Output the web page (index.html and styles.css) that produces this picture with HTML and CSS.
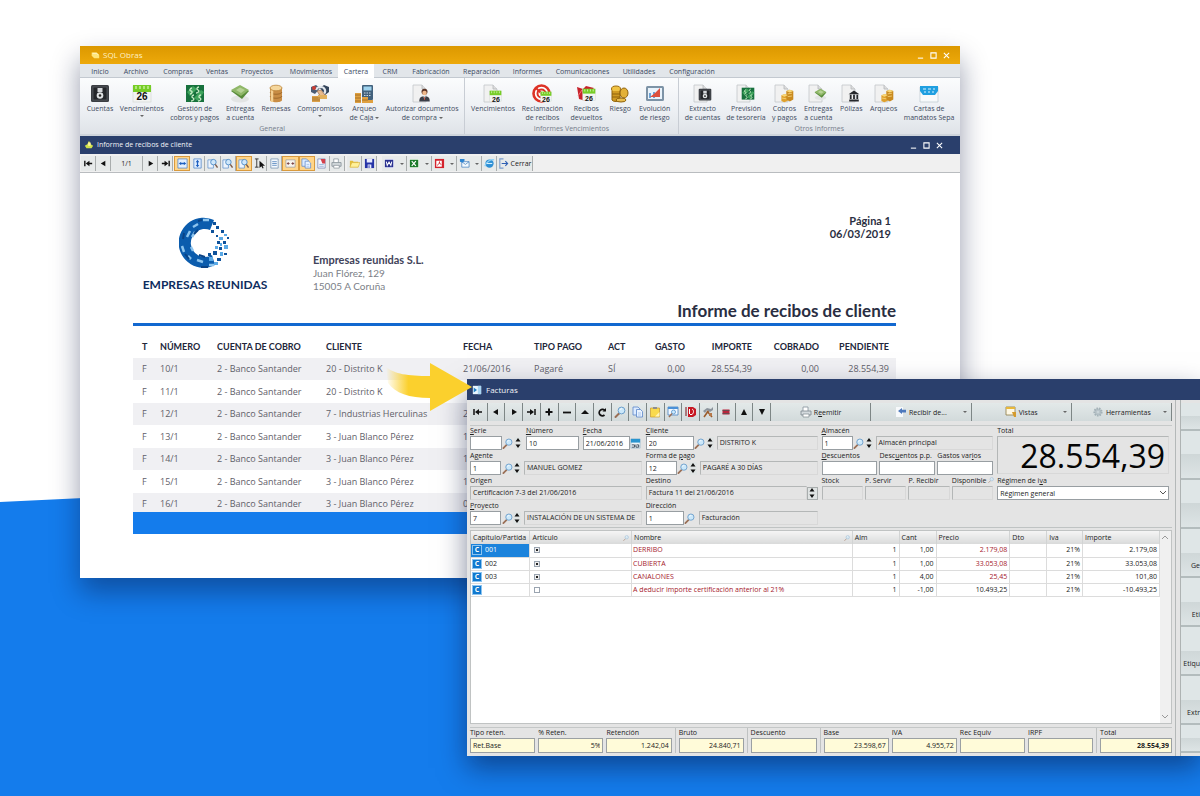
FILE: index.html
```html
<!DOCTYPE html>
<html lang="es">
<head>
<meta charset="utf-8">
<meta name="viewport" content="width=device-width, initial-scale=1">
<title>SQL Obras</title>
<link rel="stylesheet" href="styles.css">
</head>
<body>
<svg class="sprite" aria-hidden="true">
  <symbol id="doc" viewBox="0 0 20 20"><path d="M1 1h9l4 4v13H1z" fill="#f1f1f1" stroke="#c3c6ca" stroke-width=".8"/><path d="M10 1v4h4" fill="#ddd" stroke="#b5b8bb" stroke-width=".8"/></symbol>
  <symbol id="safe" viewBox="0 0 20 20"><rect x="1" y="1" width="18" height="17" rx="1.500" fill="#3b3e43"/><rect x="3" y="3" width="14" height="13" fill="#24262a" stroke="#5d6168" stroke-width=".7"/><rect x="7.500" y="4" width="5" height="4" fill="#d5d8db"/><circle cx="10" cy="11.500" r="3.300" fill="#dfe2e4"/><circle cx="10" cy="11.500" r="1.300" fill="#222"/></symbol>
  <symbol id="cal" viewBox="0 0 20 20"><rect x="1" y="2" width="18" height="16" fill="#f3f4f2" stroke="#cfd3cf" stroke-width=".6"/><path d="M1 1h18v7H1z" fill="#76cd26"/><path d="M4 2v3M8 2v3M12 2v3M16 2v3" stroke="#d8f5b8" stroke-width="1.200"/></symbol>
  <symbol id="money" viewBox="0 0 20 20"><path d="M1 1h18v17H1z" fill="#17713d"/><path d="M2 8l6-6 4 3-7 7zM9 14l7-8 3 2-6 9z" fill="#3fa45d"/><path d="M7 4c-2 0-3 3-1 3s1 3-1 3M14 3c-2 0-3 2-1 3s0 3-2 3M9 11c-2 0-3 2-1 3s0 3-2 3M16 11c-2 0-3 2-1 3s0 3-2 3" fill="none" stroke="#c8ecc6" stroke-width="1.300"/></symbol>
  <symbol id="stack" viewBox="0 0 20 20"><ellipse cx="10" cy="15" rx="9" ry="3.500" fill="#e2e4e4"/><path d="M1 7l9-5 9 5-7 8z" fill="#588b3a"/><path d="M1 6l9-5 9 5-8 6z" fill="#8fb768"/><path d="M6 6l4-2.500L15 6l-4 3z" fill="#b6d295"/></symbol>
  <symbol id="coins" viewBox="0 0 20 20"><path d="M4 4v12c0 3 12 3 12 0V4z" fill="#c98d45"/><path d="M4 8c1 3 11 3 12 0M4 12c1 3 11 3 12 0" fill="none" stroke="#a06a2c" stroke-width="1"/><path d="M6 6v12" stroke="#f3d093" stroke-width="2.500"/><ellipse cx="10" cy="4" rx="6" ry="2.800" fill="#f5d79d" stroke="#bb8438" stroke-width=".8"/></symbol>
  <symbol id="shake" viewBox="0 0 20 20"><path d="M1 3l5-2 4 3-5 6-4-2z" fill="#4b5d75"/><path d="M19 3l-5-2-4 3 5 7 4-3z" fill="#35465c"/><path d="M6 6c1-4 8-4 9 0s-4 6-7 4" fill="none" stroke="#e3e8ee" stroke-width="2.200"/><path d="M7 7l4-1 4 5-4 2z" fill="#e7ba8d" stroke="#8a5b3d" stroke-width=".6"/><circle cx="4" cy="4" r="2" fill="#cc3e34"/><path d="M2 12h8v6H2z" fill="#dba14a"/><path d="M8 11h9v4H8z" fill="#e2b15e"/><path d="M2 14h8M2 16h8" stroke="#9a6420" stroke-width=".7"/></symbol>
  <symbol id="calc" viewBox="0 0 20 20"><rect x="8" y="1" width="11" height="15" rx="1" fill="#42617c"/><rect x="9.500" y="2.500" width="8" height="4" fill="#9fd3ee"/><path d="M10 9h7M10 11.500h7" stroke="#c7d8e4" stroke-dasharray="1.500 1"/><path d="M1 9h6v10H1zM8 13h6v6H8zM14 16h5v3h-5z" fill="#dfa040"/><path d="M1 11h6M1 14h6M1 17h6M8 16h6" stroke="#9b6820" stroke-width=".8"/></symbol>
  <symbol id="person" viewBox="0 0 20 20"><circle cx="10" cy="5" r="4" fill="#5b3426"/><circle cx="10" cy="6.500" r="3" fill="#efb88b"/><path d="M3 18c0-6 3-7 7-7s7 1 7 7z" fill="#3c3f48"/><path d="M8.500 11h3L10 16z" fill="#f5f5f5"/><path d="M10 12v4" stroke="#bb3c2b"/></symbol>
  <symbol id="target" viewBox="0 0 20 20"><circle cx="9.500" cy="9.500" r="8" fill="#fff" stroke="#dd3225" stroke-width="2.600"/><circle cx="9.500" cy="9.500" r="4" fill="none" stroke="#dd3225" stroke-width="2"/><path d="M4 4l7 7" stroke="#dd3225" stroke-width="2"/></symbol>
  <symbol id="back" viewBox="0 0 20 20"><path d="M1 3l6 2 3-3 8 2-5 5-5 0 2 8-7-2z" fill="#c7222b"/><path d="M2 12l4-6 5 1" fill="none" stroke="#f1757b"/></symbol>
  <symbol id="gold" viewBox="0 0 20 20"><ellipse cx="6" cy="5" rx="4.500" ry="3" fill="#f0c343" stroke="#9c6b10"/><path d="M2 7v9c1 2 7 2 8 0V7" fill="#d09a22" stroke="#8f620d"/><ellipse cx="14" cy="9" rx="4" ry="5" fill="#e3b138" stroke="#8f620d"/><path d="M2 10h8M2 13h8" stroke="#8f620d"/><ellipse cx="11" cy="16" rx="5" ry="2" fill="#e9bd4e" stroke="#8f620d"/></symbol>
  <symbol id="cubes" viewBox="0 0 20 20"><path d="M2 9l5-2 4 2v8l-5 2-4-2z" fill="#dfa02c"/><path d="M9 3l5-2 5 2v12l-5 3-5-3z" fill="#c98a1f"/><path d="M9 3l5-2 5 2-5 2zM2 9l5-2 4 2-5 2z" fill="#f8d778"/><path d="M11 7l6-1M11 11l6-1M3 13l6 1" stroke="#f3cf75" stroke-width="1.300"/></symbol>
  <symbol id="chart" viewBox="0 0 20 20"><rect x="1" y="2" width="18" height="15" rx="1.500" fill="#7d93a6"/><rect x="3" y="4" width="14" height="11" fill="#e9f3fb"/><path d="M4 14V9h2v5M8 14V8h2v6" fill="#6ca2d5"/><path d="M5 13l5-4 5-5v9z" fill="#dc503e"/></symbol>
  <symbol id="bank" viewBox="0 0 20 20"><path d="M10 1l9 6H1zM2 16h16v3H2zM3 8h3v7H3zM8.500 8h3v7h-3zM14 8h3v7h-3z" fill="#26282c"/></symbol>
  <symbol id="sepa" viewBox="0 0 20 20"><path d="M1 3h18v15H1z" fill="#f8fafb" stroke="#bcc7cf" stroke-width=".7"/><path d="M1 2h18v5l-3 4H4L1 7z" fill="#1f9fe0"/><path d="M4 5h3M9 5h3M14 5h2M5 8h2M9 8h2M13 8h2" stroke="#d9f1ff" stroke-width="1.200"/></symbol>
  <symbol id="first" viewBox="0 0 12 12"><path d="M2 3v6M10 6H5" stroke="#111" stroke-width="1.500"/><path d="M3 6l4-3v6z" fill="#111"/></symbol>
  <symbol id="prev" viewBox="0 0 12 12"><path d="M3 6l5-3v6z" fill="#111"/></symbol>
  <symbol id="next" viewBox="0 0 12 12"><path d="M9 6L4 3v6z" fill="#111"/></symbol>
  <symbol id="last" viewBox="0 0 12 12"><path d="M10 3v6M2 6h5" stroke="#111" stroke-width="1.500"/><path d="M9 6L5 3v6z" fill="#111"/></symbol>
  <symbol id="plus" viewBox="0 0 12 12"><path d="M6 2.500v7M2.500 6h7" stroke="#111" stroke-width="2"/></symbol>
  <symbol id="minus" viewBox="0 0 12 12"><path d="M2 6.500h8" stroke="#111" stroke-width="1.800"/></symbol>
  <symbol id="tri" viewBox="0 0 12 12"><path d="M6 4l4 4H2z" fill="#111"/></symbol>
  <symbol id="up" viewBox="0 0 12 12"><path d="M6 3l3 6H3z" fill="#111"/></symbol>
  <symbol id="down" viewBox="0 0 12 12"><path d="M6 9l3-6H3z" fill="#111"/></symbol>
  <symbol id="redo" viewBox="0 0 12 12"><path d="M8.500 9A3.200 3.200 0 1 1 9 4.800" fill="none" stroke="#111" stroke-width="1.700"/><path d="M6.500 5.500H10V2z" fill="#111"/></symbol>
  <symbol id="mag" viewBox="0 0 12 12"><path d="M5 7.500L1.500 11" stroke="#9a6f56" stroke-width="1.900" stroke-linecap="round"/><circle cx="7.500" cy="4.500" r="3.400" fill="#cbe8fa" stroke="#6d9fcb"/><path d="M6 3.800c.5-1 1.500-1 2-1" fill="none" stroke="#fff"/></symbol>
  <symbol id="pages" viewBox="0 0 12 12"><path d="M1 1h5l2 2v6H1z" fill="#dcebff" stroke="#5b86c9" stroke-width=".8"/><path d="M4.500 3.500h4l2 2V11h-6z" fill="#eaf3ff" stroke="#5b86c9" stroke-width=".8"/><path d="M6 7h3M6 9h3" stroke="#8db1e4" stroke-width=".7"/></symbol>
  <symbol id="clip" viewBox="0 0 12 12"><path d="M1.500 2h9v9h-9z" fill="#f9da4d" stroke="#c9992c" stroke-width=".7"/><path d="M4 1h4v2H4z" fill="#8f8f8f"/><path d="M6 10.500L10.500 6v4.500z" fill="#fff4b8"/></symbol>
  <symbol id="view" viewBox="0 0 12 12"><path d="M1 1h10v8H1z" fill="#f2f8ff" stroke="#4783c3" stroke-width=".8"/><path d="M1 1h10v2H1z" fill="#4b91d8"/><circle cx="6.500" cy="6" r="2" fill="#cdeafd" stroke="#5492ca" stroke-width=".8"/><path d="M5 7.500L2 11" stroke="#9a6f56" stroke-width="1.400"/></symbol>
  <symbol id="power" viewBox="0 0 12 12"><path d="M3 1h5l3 2v6L8 11H3z" fill="#c71722"/><path d="M4.500 3v5M7 3c2 1 2 4 0 5.500H5" stroke="#fff" fill="none"/><path d="M1 1v9" stroke="#7b0e16"/></symbol>
  <symbol id="tools" viewBox="0 0 12 12"><path d="M2 11l5-7M10 11L5 5" stroke="#9a5b2b" stroke-width="1.600"/><path d="M1 5l4-3 4 1 2-2v3L8 6 5 4 3 7z" fill="#8c949c"/><path d="M7 7h3v3H7z" fill="#b7794a"/></symbol>
  <symbol id="red" viewBox="0 0 12 12"><path d="M2.500 3.500h7v5h-7z" fill="#b9253c"/><path d="M2.500 4.500h7M2.500 7.500h7" stroke="#555" stroke-width=".8"/></symbol>
  <symbol id="print" viewBox="0 0 12 12"><path d="M3 5V1h5v4" fill="#fff" stroke="#849099" stroke-width=".8"/><path d="M1 5h10v4H1z" fill="#d4dade" stroke="#7b868e" stroke-width=".8"/><path d="M3 8h6v3H3z" fill="#fff" stroke="#7b868e" stroke-width=".7"/></symbol>
  <symbol id="recv" viewBox="0 0 12 12"><path d="M1 1h7v10H1z" fill="#f7f9fb"/><path d="M3 5l4-3v1.800h4v2.800H7V8z" fill="#4d79bd"/></symbol>
  <symbol id="win" viewBox="0 0 12 12"><path d="M1 1h9v8H1z" fill="#fff9e5" stroke="#8b7a45" stroke-width=".8"/><path d="M1 1h9v2H1z" fill="#e8b83b"/><path d="M7 6h4v5H9z" fill="#d59b2d"/></symbol>
  <symbol id="gear" viewBox="0 0 12 12"><circle cx="6" cy="6" r="3.600" fill="#b7c3c8" stroke="#a3b1b7" stroke-width="2" stroke-dasharray="1.500 1"/><circle cx="6" cy="6" r="1.300" fill="#c9d4d8"/></symbol>
  <symbol id="fitw" viewBox="0 0 12 12"><path d="M1 1h10v10H1z" fill="#e3f0ff" stroke="#4a80c7" stroke-width=".8"/><path d="M2 6l2.500-2v1.300h3V4L10 6 7.500 8V6.700h-3V8z" fill="#1d5fc0"/></symbol>
  <symbol id="cont" viewBox="0 0 12 12"><path d="M1 2h10v8H1z" fill="#f7f4ee" stroke="#9d9d9d" stroke-width=".8"/><path d="M2 6h3M7 6h3M3.500 4.500v3M8.500 4.500v3" stroke="#7b4444"/></symbol>
  <symbol id="fith" viewBox="0 0 12 12"><path d="M2 1h8v10H2z" fill="#e3f0ff" stroke="#4a80c7" stroke-width=".8"/><path d="M6 2l2 2.500H6.700v3H8L6 10 4 7.500h1.300v-3H4z" fill="#1d5fc0"/></symbol>
  <symbol id="zoomdoc" viewBox="0 0 12 12"><path d="M1 2h6v9H1z" fill="#edf4fc" stroke="#5f92cc" stroke-width=".8"/><circle cx="7" cy="4.500" r="3" fill="#cfe7fa" stroke="#4384c4" stroke-width=".9"/><path d="M9 7l2.500 3.500" stroke="#7c5b4b" stroke-width="1.500"/></symbol>
  <symbol id="cursor" viewBox="0 0 12 12"><path d="M1 1h4M3 1v9M1 10h4" stroke="#222" stroke-width=".9"/><path d="M6 3v8l2-2 1.500 2.500 1-.6L9.300 8.500H12z" fill="#111"/></symbol>
  <symbol id="sheet" viewBox="0 0 12 12"><path d="M2 1h8v10H2z" fill="#f5f9fd" stroke="#6f8fae" stroke-width=".8"/><path d="M3.500 4h5M3.500 6h5M3.500 8h5" stroke="#5587bd" stroke-width=".9"/></symbol>
  <symbol id="redsheet" viewBox="0 0 12 12"><path d="M2 1h8v10H2z" fill="#f6f7ff" stroke="#7684b3" stroke-width=".8"/><path d="M5 1h5v5H7z" fill="#d4414c"/><path d="M3.500 7h5M3.500 9h5" stroke="#7da3cd" stroke-width=".8"/></symbol>
  <symbol id="folder" viewBox="0 0 12 12"><path d="M1 10V3h3l1 1h5v6z" fill="#e3bd3a"/><path d="M1 10l2-5h9l-2 5z" fill="#fff19a" stroke="#d1a82c" stroke-width=".6"/></symbol>
  <symbol id="save" viewBox="0 0 12 12"><path d="M1 1h10v10H1z" fill="#2533a6"/><path d="M3 1h6v4H3zM4 7h4v4H4z" fill="#e8ebff"/><path d="M5 8h1v3H5z" fill="#2533a6"/></symbol>
  <symbol id="word" viewBox="0 0 12 12"><path d="M1 1h10v10H1z" fill="#dfe3f7"/><path d="M1 2h9v8H1z" fill="#29308f"/><path d="M2.500 4l1 4 2-3.500 2 3.500 1-4" fill="none" stroke="#fff" stroke-width="1.100"/></symbol>
  <symbol id="excel" viewBox="0 0 12 12"><path d="M1 1h10v10H1z" fill="#e2f0e1"/><path d="M1 2h9v8H1z" fill="#1b7b2a"/><path d="M3 3.500l4.500 5M7.500 3.500L3 8.500" stroke="#fff" stroke-width="1.300"/></symbol>
  <symbol id="pdf" viewBox="0 0 12 12"><path d="M1 1h10v10H1z" fill="#d4232d"/><path d="M2.500 3h6v6.500h-6z" fill="#fff"/><path d="M3.500 8c2-1 3-4 2.500-4s0 3 2 3" fill="none" stroke="#d4232d"/></symbol>
  <symbol id="mail" viewBox="0 0 12 12"><path d="M3 4h8v6H3z" fill="#f5fbff" stroke="#4380bf" stroke-width=".8"/><path d="M3 4l4 3 4-3" fill="none" stroke="#4380bf" stroke-width=".8"/><path d="M1 1h5v2l-2 2-3-1z" fill="#2d84d1"/></symbol>
  <symbol id="globe" viewBox="0 0 12 12"><circle cx="6" cy="6" r="4.500" fill="#2e8fd4"/><path d="M1 9C2 4 8 1 11 2" fill="none" stroke="#8bd0f7" stroke-width="1.500"/><path d="M3 6h6" stroke="#d6f0ff" stroke-width="1.200"/></symbol>
  <symbol id="exit" viewBox="0 0 12 12"><path d="M6 1H2v10h4" fill="none" stroke="#7b9ccc" stroke-width="1.200"/><path d="M4 6h6M8 3.500L10.500 6 8 8.500" fill="none" stroke="#2e5fb4" stroke-width="1.200"/></symbol>
  <symbol id="minical" viewBox="0 0 12 12"><path d="M1 1h10v10H1z" fill="#eef6fa" stroke="#7fa8c0" stroke-width=".6"/><path d="M1 1h10v4H1z" fill="#2a95cf"/><path d="M2 7.500h3v2.500H2M6.500 7v3h3V7.500h-2" fill="none" stroke="#234" stroke-width=".9"/></symbol>
  <symbol id="spin" viewBox="0 0 8 12"><path d="M4 1l2.500 3.500h-5zM4 11l2.500-3.500h-5z" fill="#111"/></symbol>
</svg>

<main class="desktop">
  <section class="window obras">
    <header class="titlebar gold">
      <svg class="i10" viewBox="0 0 12 12"><path d="M2 3h6l3 3v4H5L2 7z" fill="#ffe67a"/><path d="M3 4h5l2 2" fill="none" stroke="#fff8cf"/></svg>
      <h1>SQL Obras</h1>
      <div class="winbtns">
        <button aria-label="Minimizar"><svg viewBox="0 0 8 8"><path d="M1 7h6"/></svg></button>
        <button aria-label="Maximizar"><svg viewBox="0 0 8 8"><path d="M1 1h6v6H1z"/></svg></button>
        <button aria-label="Cerrar ventana"><svg viewBox="0 0 8 8"><path d="M1 1l6 6M7 1L1 7"/></svg></button>
      </div>
    </header>
    <nav class="tabs">
      <button>Inicio</button><button>Archivo</button><button>Compras</button><button>Ventas</button><button>Proyectos</button><button>Movimientos</button><button class="active">Cartera</button><button>CRM</button><button>Fabricación</button><button>Reparación</button><button>Informes</button><button>Comunicaciones</button><button>Utilidades</button><button>Configuración</button>
    </nav>
    <div class="ribbon">
      <section class="group general">
        <div class="tools">
          <button><svg><use href="#safe"/></svg>Cuentas</button>
          <button><svg viewBox="0 0 20 20"><use href="#cal"/><text x="10" y="16" class="day">26</text></svg>Vencimientos<i class="caret"></i></button>
          <button><svg><use href="#money"/></svg>Gestión de<br>cobros y pagos</button>
          <button><svg><use href="#stack"/></svg>Entregas<br>a cuenta</button>
          <button><svg><use href="#coins"/></svg>Remesas</button>
          <button><svg><use href="#shake"/></svg>Compromisos<i class="caret"></i></button>
          <button><svg><use href="#calc"/></svg>Arqueo<span>de Caja <i class="caret"></i></span></button>
          <button><svg viewBox="0 0 20 20"><use href="#doc"/><use href="#person" x="5" y="4" width="15" height="15"/></svg>Autorizar documentos<span>de compra <i class="caret"></i></span></button>
        </div>
        <h2>General</h2>
      </section>
      <section class="group due">
        <div class="tools">
          <button><svg viewBox="0 0 20 20"><use href="#doc"/><use href="#cal" x="6" y="6" width="13" height="13"/><text x="13" y="18" class="day small">26</text></svg>Vencimientos</button>
          <button><svg viewBox="0 0 20 20"><use href="#target"/><use href="#cal" x="8" y="7" width="12" height="12"/><text x="14" y="18" class="day small">26</text></svg>Reclamación<br>de recibos</button>
          <button><svg viewBox="0 0 20 20"><use href="#back"/><use href="#cal" x="6" y="4" width="14" height="14"/><text x="13" y="17" class="day small">26</text></svg>Recibos<br>devueltos</button>
          <button><svg><use href="#gold"/></svg>Riesgo</button>
          <button><svg><use href="#chart"/></svg>Evolución<br>de riesgo</button>
        </div>
        <h2>Informes Vencimientos</h2>
      </section>
      <section class="group other">
        <div class="tools">
          <button><svg viewBox="0 0 20 20"><use href="#doc"/><use href="#safe" x="5" y="4" width="14" height="14"/></svg>Extracto<br>de cuentas</button>
          <button><svg viewBox="0 0 20 20"><use href="#doc"/><use href="#money" x="5" y="3" width="14" height="14"/></svg>Previsión<br>de tesorería</button>
          <button><svg viewBox="0 0 20 20"><use href="#doc"/><use href="#cubes" x="6" y="5" width="14" height="14"/></svg>Cobros<br>y pagos</button>
          <button><svg viewBox="0 0 20 20"><use href="#doc"/><use href="#stack" x="5" y="4" width="15" height="13"/></svg>Entregas<br>a cuenta</button>
          <button><svg viewBox="0 0 20 20"><use href="#doc"/><use href="#bank" x="7" y="6" width="12" height="12"/></svg>Pólizas</button>
          <button><svg viewBox="0 0 20 20"><use href="#doc"/><use href="#cubes" x="6" y="5" width="14" height="14"/></svg>Arqueos</button>
          <button><svg><use href="#sepa"/></svg>Cartas de<br>mandatos Sepa</button>
        </div>
        <h2>Otros Informes</h2>
      </section>
    </div>
    <header class="titlebar navy">
      <svg class="i10" viewBox="0 0 12 12"><path d="M6 1l2 4 3 2-2 3H3L1 7l3-2z" fill="#cfe04a"/><path d="M5 3h3v4H5z" fill="#fff3a0"/></svg>
      <h2>Informe de recibos de cliente</h2>
      <div class="winbtns">
        <button aria-label="Minimizar"><svg viewBox="0 0 8 8"><path d="M1 7h6"/></svg></button>
        <button aria-label="Maximizar"><svg viewBox="0 0 8 8"><path d="M1 1h6v6H1z"/></svg></button>
        <button aria-label="Cerrar informe"><svg viewBox="0 0 8 8"><path d="M1 1l6 6M7 1L1 7"/></svg></button>
      </div>
    </header>
    <div class="viewer-bar">
      <button aria-label="Primera"><svg><use href="#first"/></svg></button>
      <button aria-label="Anterior"><svg><use href="#prev"/></svg></button>
      <input class="page-no" aria-label="Página" value="1/1">
      <button aria-label="Siguiente"><svg><use href="#next"/></svg></button>
      <button aria-label="Última"><svg><use href="#last"/></svg></button>
      <div class="modes">
        <button class="on" aria-label="Ajustar ancho"><svg><use href="#fitw"/></svg></button>
        <button aria-label="Ajustar alto"><svg><use href="#fith"/></svg></button>
        <button aria-label="Acercar"><svg><use href="#zoomdoc"/></svg></button>
        <button aria-label="Alejar"><svg><use href="#zoomdoc"/></svg></button>
        <button class="on" aria-label="Lupa"><svg><use href="#zoomdoc"/></svg></button>
        <button aria-label="Seleccionar"><svg><use href="#cursor"/></svg></button>
        <button aria-label="Hoja"><svg><use href="#sheet"/></svg></button>
        <button class="on" aria-label="Continuo"><svg><use href="#cont"/></svg></button>
        <button class="on" aria-label="Páginas"><svg><use href="#pages"/></svg></button>
        <button aria-label="Configurar"><svg><use href="#redsheet"/></svg></button>
        <button aria-label="Imprimir"><svg><use href="#print"/></svg></button>
      </div>
      <button class="gap" aria-label="Abrir"><svg><use href="#folder"/></svg></button>
      <button aria-label="Guardar"><svg><use href="#save"/></svg></button>
      <div class="exports">
        <button class="wide" aria-label="Word"><svg><use href="#word"/></svg><i class="caret"></i></button>
        <button class="wide" aria-label="Excel"><svg><use href="#excel"/></svg><i class="caret"></i></button>
        <button class="wide" aria-label="PDF"><svg><use href="#pdf"/></svg><i class="caret"></i></button>
        <button class="wide" aria-label="Correo"><svg><use href="#mail"/></svg><i class="caret"></i></button>
      </div>
      <button aria-label="Web"><svg><use href="#globe"/></svg></button>
      <button class="close"><svg><use href="#exit"/></svg>Cerrar</button>
    </div>
    <article class="report">
      <header class="report-head">
        <div class="brand">
          <svg viewBox="0 0 52 52">
            <path d="M35 3A25 25 0 1 0 36 48L33 38A14 14 0 1 1 31 13z" fill="#0b5cad"/>
            <g fill="none" stroke="#8cc4ee" stroke-width="2.500"><path d="M8 20l3-6M14 10l5-3M24 3h6M3 29l2 6M9 39l3 3M18 43l6 2M30 48h5M13 20l3-5M12 30l2 4"/></g>
            <g fill="none" stroke="#0a4386" stroke-width="2"><path d="M4 22l1-6M19 4l4-1M6 37l4 5M22 50l7 0M20 38l6 2M15 17l4-4"/></g>
            <path d="M32 13h3v3h-3zM37 9h3v3h-3zM42 13h3v3h-3zM37 18h2v2h-2zM34 34h4v4h-4zM40 30h3v3h-3zM44 24h3v3h-3zM48 20h2v2h-2zM38 41h4v3h-4zM45 36h3v2h-3zM38 24h3v3h-3zM34 5h3v3h-3zM29 36h3v3h-3z" fill="#0e529b"/>
            <path d="M40 20h4v3h-4zM45 28h4v4h-4zM41 35h3v4h-3zM36 29h3v3h-3zM35 45h4v3h-4zM45 17h3v2h-3zM30 40h4v4h-4zM41 26h2v3h-2z" fill="#5aa9e6"/>
          </svg>
          <strong>EMPRESAS REUNIDAS</strong>
        </div>
        <address><strong>Empresas reunidas S.L.</strong><br>Juan Flórez, 129<br>15005 A Coruña</address>
        <p class="page">Página 1<br>06/03/2019</p>
      </header>
      <h3>Informe de recibos de cliente</h3>
      <table class="receipts">
        <colgroup><col class="r1"><col class="r2"><col class="r3"><col class="r4"><col class="r5"><col class="r6"><col class="r7"><col class="r8"><col class="r9"><col class="r10"><col class="r11"></colgroup>
        <thead><tr><th>T</th><th>NÚMERO</th><th>CUENTA DE COBRO</th><th>CLIENTE</th><th>FECHA</th><th>TIPO PAGO</th><th>ACT</th><th class="n">GASTO</th><th class="n">IMPORTE</th><th class="n">COBRADO</th><th class="n">PENDIENTE</th></tr></thead>
        <tbody>
          <tr><td>F</td><td>10/1</td><td>2 - Banco Santander</td><td>20 - Distrito K</td><td>21/06/2016</td><td>Pagaré</td><td>SÍ</td><td class="n">0,00</td><td class="n">28.554,39</td><td class="n">0,00</td><td class="n">28.554,39</td></tr>
          <tr><td>F</td><td>11/1</td><td>2 - Banco Santander</td><td>20 - Distrito K</td><td></td><td></td><td></td><td></td><td></td><td></td><td></td></tr>
          <tr><td>F</td><td>12/1</td><td>2 - Banco Santander</td><td>7 - Industrias Herculinas</td><td>2</td><td></td><td></td><td></td><td></td><td></td><td></td></tr>
          <tr><td>F</td><td>13/1</td><td>2 - Banco Santander</td><td>3 - Juan Blanco Pérez</td><td>1</td><td></td><td></td><td></td><td></td><td></td><td></td></tr>
          <tr><td>F</td><td>14/1</td><td>2 - Banco Santander</td><td>3 - Juan Blanco Pérez</td><td>1</td><td></td><td></td><td></td><td></td><td></td><td></td></tr>
          <tr><td>F</td><td>15/1</td><td>2 - Banco Santander</td><td>3 - Juan Blanco Pérez</td><td>1</td><td></td><td></td><td></td><td></td><td></td><td></td></tr>
          <tr><td>F</td><td>16/1</td><td>2 - Banco Santander</td><td>3 - Juan Blanco Pérez</td><td>0</td><td></td><td></td><td></td><td></td><td></td><td></td></tr>
        </tbody>
      </table>
      <div class="report-foot"></div>
    </article>
  </section>

  <section class="window facturas">
    <header class="titlebar navy tall">
      <svg class="i10" viewBox="0 0 12 12"><path d="M1 1h10v10H1z" fill="#e9f6ff"/><path d="M7 1h4v10H7z" fill="#a9d6f3"/><path d="M2 3l4 3-4 3z" fill="#1f7fc4"/></svg>
      <h2>Facturas</h2>
    </header>
    <div class="invoice">
      <div class="invoice-main">
        <div class="bar">
          <div class="bar-icons">
            <button aria-label="Primero"><svg><use href="#first"/></svg></button><button aria-label="Anterior"><svg><use href="#prev"/></svg></button><button aria-label="Siguiente"><svg><use href="#next"/></svg></button><button aria-label="Último"><svg><use href="#last"/></svg></button><button aria-label="Añadir"><svg><use href="#plus"/></svg></button><button aria-label="Eliminar"><svg><use href="#minus"/></svg></button><button aria-label="Editar"><svg><use href="#tri"/></svg></button><button aria-label="Refrescar"><svg><use href="#redo"/></svg></button><button aria-label="Buscar"><svg><use href="#mag"/></svg></button><button aria-label="Copiar"><svg><use href="#pages"/></svg></button><button aria-label="Pegar"><svg><use href="#clip"/></svg></button><button aria-label="Vista previa"><svg><use href="#view"/></svg></button><button aria-label="Salir"><svg><use href="#power"/></svg></button><button aria-label="Utilidades"><svg><use href="#tools"/></svg></button><button aria-label="Líneas"><svg><use href="#red"/></svg></button><button aria-label="Subir"><svg><use href="#up"/></svg></button><button aria-label="Bajar"><svg><use href="#down"/></svg></button>
          </div>
          <button class="big"><svg><use href="#print"/></svg><span>R<u>e</u>emitir</span></button>
          <button class="big"><svg><use href="#recv"/></svg>Recibir de...<i class="caret"></i></button>
          <button class="big"><svg><use href="#win"/></svg>Vistas<i class="caret"></i></button>
          <button class="big"><svg><use href="#gear"/></svg>Herramientas<i class="caret"></i></button>
        </div>

        <form class="form">
          <div class="col col-a">
            <div class="row first">
              <div class="field"><label for="serie"><u>S</u>erie</label><div class="ctl"><input id="serie"><button type="button" class="pick" aria-label="Buscar serie"><svg><use href="#mag"/></svg></button><button type="button" class="spin" aria-label="Cambiar serie"><svg><use href="#spin"/></svg></button></div></div>
              <div class="field"><label for="numero"><u>N</u>úmero</label><div class="ctl"><input id="numero" value="10"></div></div>
              <div class="field"><label for="fecha"><u>F</u>echa</label><div class="ctl"><input id="fecha" value="21/06/2016"><button type="button" class="pick" aria-label="Calendario"><svg><use href="#minical"/></svg></button></div></div>
            </div>
            <div class="field"><label for="agente">A<u>g</u>ente</label><div class="ctl"><input id="agente" class="code" value="1"><button type="button" class="pick" aria-label="Buscar agente"><svg><use href="#mag"/></svg></button><button type="button" class="spin" aria-label="Cambiar agente"><svg><use href="#spin"/></svg></button><output>MANUEL GOMEZ</output></div></div>
            <div class="field"><label for="origen">Origen</label><div class="ctl"><output id="origen">Certificación 7-3 del 21/06/2016</output></div></div>
            <div class="field"><label for="proyecto"><u>P</u>royecto</label><div class="ctl"><input id="proyecto" class="code" value="7"><button type="button" class="pick" aria-label="Buscar proyecto"><svg><use href="#mag"/></svg></button><button type="button" class="spin" aria-label="Cambiar proyecto"><svg><use href="#spin"/></svg></button><output>INSTALACIÓN DE UN SISTEMA DE</output></div></div>
          </div>
          <div class="col col-b">
            <div class="field"><label for="cliente"><u>C</u>liente</label><div class="ctl"><input id="cliente" class="code long" value="20"><button type="button" class="pick" aria-label="Buscar cliente"><svg><use href="#mag"/></svg></button><button type="button" class="spin" aria-label="Cambiar cliente"><svg><use href="#spin"/></svg></button><output>DISTRITO K</output></div></div>
            <div class="field"><label for="pago">Forma de <u>p</u>ago</label><div class="ctl"><input id="pago" class="code" value="12"><button type="button" class="pick" aria-label="Buscar forma de pago"><svg><use href="#mag"/></svg></button><button type="button" class="spin" aria-label="Cambiar forma de pago"><svg><use href="#spin"/></svg></button><output>PAGARÉ A 30 DÍAS</output></div></div>
            <div class="field"><label for="destino">Destino</label><div class="ctl"><output id="destino">Factura 11 del 21/06/2016</output><button type="button" class="spin boxed" aria-label="Cambiar destino"><svg><use href="#spin"/></svg></button></div></div>
            <div class="field"><label for="direccion">Dirección</label><div class="ctl"><input id="direccion" class="code mid" value="1"><button type="button" class="pick" aria-label="Buscar dirección"><svg><use href="#mag"/></svg></button><output>Facturación</output></div></div>
          </div>
          <div class="col col-c">
            <div class="field"><label for="almacen"><u>A</u>lmacén</label><div class="ctl"><input id="almacen" class="code" value="1"><button type="button" class="pick" aria-label="Buscar almacén"><svg><use href="#mag"/></svg></button><button type="button" class="spin" aria-label="Cambiar almacén"><svg><use href="#spin"/></svg></button><output>Almacén principal</output></div></div>
            <div class="row tight">
              <div class="field"><label for="dto"><u>D</u>escuentos</label><div class="ctl"><input id="dto"></div></div>
              <div class="field"><label for="dtopp">Desc<u>u</u>entos p.p.</label><div class="ctl"><input id="dtopp"></div></div>
              <div class="field"><label for="gastos">Gastos var<u>i</u>os</label><div class="ctl"><input id="gastos"></div></div>
            </div>
            <div class="row tight">
              <div class="field"><label for="stock">Stock</label><div class="ctl"><output id="stock"></output></div></div>
              <div class="field"><label for="servir">P. Servir</label><div class="ctl"><output id="servir"></output></div></div>
              <div class="field"><label for="recibir">P. Recibir</label><div class="ctl"><output id="recibir"></output></div></div>
              <div class="field"><label for="disp">Disponible <svg class="i6"><use href="#mag"/></svg></label><div class="ctl"><output id="disp"></output></div></div>
            </div>
          </div>
          <div class="col col-d">
            <div class="field total"><label for="total">Total</label><output id="total">28.554,39</output></div>
            <div class="field"><label for="iva">Régimen de i<u>v</u>a</label><div class="ctl select"><select id="iva"><option>Régimen general</option></select><svg viewBox="0 0 10 10"><path d="M2 3l3 3 3-3" fill="none" stroke="#555"/></svg></div></div>
          </div>
        </form>

        <div class="lines">
          <table class="grid">
            <colgroup><col class="g1"><col class="g2"><col class="g3"><col class="g4"><col class="g5"><col class="g6"><col class="g7"><col class="g8"><col class="g9"></colgroup>
            <thead><tr><th>Capítulo/Partida</th><th>Artículo<svg class="i6"><use href="#mag"/></svg></th><th>Nombre<svg class="i6"><use href="#mag"/></svg></th><th>Alm</th><th>Cant</th><th>Precio</th><th>Dto</th><th>Iva</th><th>Importe</th></tr></thead>
            <tbody>
              <tr><td class="sel"><span class="code-cell"><b class="tag">C</b>001</span></td><td><i class="box dot"></i></td><td class="red">DERRIBO</td><td>1</td><td>1,00</td><td class="red">2.179,08</td><td></td><td>21%</td><td>2.179,08</td></tr>
              <tr><td><span class="code-cell"><b class="tag">C</b>002</span></td><td><i class="box dot"></i></td><td class="red">CUBIERTA</td><td>1</td><td>1,00</td><td class="red">33.053,08</td><td></td><td>21%</td><td>33.053,08</td></tr>
              <tr><td><span class="code-cell"><b class="tag">C</b>003</span></td><td><i class="box dot"></i></td><td class="red">CANALONES</td><td>1</td><td>4,00</td><td class="red">25,45</td><td></td><td>21%</td><td>101,80</td></tr>
              <tr><td><span class="code-cell"><b class="tag">C</b></span></td><td><i class="box"></i></td><td class="red">A deducir importe certificación anterior al 21%</td><td>1</td><td>-1,00</td><td>10.493,25</td><td></td><td>21%</td><td>-10.493,25</td></tr>
            </tbody>
          </table>
          <div class="scroll"><svg viewBox="0 0 10 10"><path d="M2 6l3-3 3 3"/></svg><svg viewBox="0 0 10 10"><path d="M2 4l3 3 3-3"/></svg></div>
        </div>

        <footer class="totals">
          <div class="set lead">
            <label>Tipo reten.<input class="left" value="Ret.Base"></label><label>% Reten.<input value="5%"></label><label>Retención<input value="1.242,04"></label>
          </div>
          <div class="set"><label>Bruto<input value="24.840,71"></label></div>
          <div class="set"><label>Descuento<input></label></div>
          <div class="set">
            <label>Base<input value="23.598,67"></label><label>IVA<input value="4.955,72"></label><label>Rec Equiv<input></label><label>IRPF<input></label>
          </div>
          <div class="set last"><label>Total<input class="bold" value="28.554,39"></label></div>
        </footer>
      </div>
      <aside class="side">
        <button aria-label="Panel"></button><button aria-label="Panel"></button><button aria-label="Panel"></button><button>Ge</button><button>Eti</button><button>Etiqu</button><button>Extr</button><button aria-label="Panel"></button>
      </aside>
    </div>
  </section>

  <svg class="arrow" viewBox="0 0 88 50">
    <defs><linearGradient id="fade" x1="0" x2="1"><stop offset="0" stop-color="#fbd02d" stop-opacity="0"/><stop offset=".26" stop-color="#fbd02d"/></linearGradient></defs>
    <path d="M1 5C10 12 22 14 45 14V1L87 25 45 49V36C24 36 10 31 3 21z" fill="url(#fade)"/>
  </svg>
</main>
</body>
</html>
```

FILE: styles.css
```css
* { box-sizing: border-box; }
body { margin: 0; background: #fff; font-family: "Open Sans", "Noto Sans", sans-serif; font-size: 7px; color: #222; }
h1, h2, h3, p { margin: 0; }
button { font: inherit; color: inherit; border: 0; background: none; padding: 0; }
input, select, output { font: inherit; color: inherit; }
.sprite { position: absolute; width: 0; height: 0; }
.day { font: bold 10px "Liberation Sans", sans-serif; fill: #111; text-anchor: middle; }
.day.small { font-size: 7px; }

.desktop { position: relative; min-height: 100vh; overflow: hidden; }
.desktop::before { content: ""; position: absolute; inset: 0; background: #147cec; clip-path: polygon(0 502px, 100% 445px, 100% 100%, 0 100%); }
.window { position: absolute; }
.obras { left: 80px; right: 240px; top: 46px; background: #fff; box-shadow: 0 14px 26px rgba(8, 20, 60, .42); }
.facturas { left: 467px; right: 0; top: 379px; background: #e4e4e4; box-shadow: 0 12px 26px rgba(8, 20, 60, .5); }

.titlebar { display: flex; align-items: center; gap: 3px; height: 18px; padding: 0 10px; color: #fff; }
.titlebar h1, .titlebar h2 { flex: 1; font-size: 7px; line-height: 10px; font-weight: 400; }
.titlebar h1, .tall h2 { font-size: 8px; }
.gold { background: linear-gradient(#dc9800, #eda90a); color: #fff0c4; }
.navy { background: #2a3f6c; color: #f0f3f8; padding: 0 17px 0 4px; }
.tall { height: 21px; padding-left: 5px; gap: 4px; }
.i10 { width: 10px; height: 10px; }
.i6 { width: 6px; height: 6px; opacity: .6; }
.winbtns { display: flex; gap: 6px; }
.winbtns button { width: 7px; height: 7px; display: flex; }
.winbtns svg { width: 7px; height: 7px; fill: none; stroke: #fff; stroke-width: 1.2; }
.caret { display: inline-block; border: 2px solid transparent; border-top-color: #666; border-bottom: 0; vertical-align: middle; }

.tabs { display: grid; grid-template-columns: 40px 32px 52px 26px 54px 54px 36px 32px 50px 51px 41px 69px 44px 62px; justify-content: start; height: 14px; background: #e2e6ea; color: #3c4a63; border-bottom: 1px solid #c3c9d0; white-space: nowrap; }
.tabs button { display: flex; align-items: center; justify-content: center; }
.tabs .active { background: #fff; height: 14px; }
.ribbon { display: flex; height: 58px; background: linear-gradient(#fbfcfd, #eceff3 60%, #dfe3e8); border-bottom: 2px solid #cfd5dc; color: #3d4a60; }
.group { display: flex; flex-direction: column; border-right: 1px solid #c8cdd4; }
.general { flex: 385; }
.due { flex: 213; }
.other { flex: 282; border: 0; }
.tools { display: grid; flex: 1; padding-top: 6px; }
.general .tools { grid-template-columns: 40fr 44fr 62fr 29fr 43fr 45fr 44fr 72fr 6fr; }
.due .tools { grid-template-columns: 56fr 43fr 45fr 23fr 46fr; }
.other .tools { grid-template-columns: 48fr 39fr 38fr 30fr 36fr 29fr 62fr; }
.tools button { display: flex; flex-direction: column; align-items: center; justify-content: flex-start; line-height: 9px; white-space: nowrap; min-width: 0; }
.tools svg { width: 20px; height: 20px; flex: none; }
.tools .caret { margin-top: 2px; }
.tools span .caret { margin: 0; }
.group h2 { font-size: 7px; line-height: 11px; font-weight: 400; color: #767e8b; text-align: center; }

.viewer-bar { display: flex; align-items: center; height: 19px; padding: 1px 0 0 1px; background: #f0f0f0; border-bottom: 1px solid #b9bcbf; }
.viewer-bar button { display: flex; align-items: center; justify-content: center; width: 15px; height: 15px; background: #e7eaea; border-right: 1px solid #a9adad; gap: 2px; }
.viewer-bar svg { width: 11px; height: 11px; flex: none; }
.viewer-bar .on { background: #ffd58a; border: 1px solid #d99a3d; }
.viewer-bar .page-no { width: 32px; height: 15px; padding: 0; border: 0; border-right: 1px solid #a9adad; background: #e7eaea; text-align: center; }
.modes { display: flex; width: 171px; margin-left: 1px; }
.modes button { flex: 1; }
.exports { display: flex; margin-left: 5px; }
.viewer-bar .gap { margin-left: 2px; }
.viewer-bar .wide { width: 25px; gap: 5px; }
.viewer-bar .close { width: 36px; }

.report { padding: 41px 64px 44px 53px; }
.report-head { display: flex; align-items: flex-start; height: 79px; font-family: Lato, sans-serif; font-size: 10px; line-height: 13px; color: #2b2f42; }
.brand { display: flex; flex-direction: column; align-items: center; gap: 9px; width: 120px; margin: 3px 48px 0 12px; font-size: 12px; line-height: 14px; color: #0e2d5e; white-space: nowrap; }
.brand svg { width: 52px; height: 52px; }
.report address { align-self: flex-end; font-style: normal; color: #7c7f88; }
.report address strong { font-size: 11px; color: #41435a; }
.report .page { margin-left: auto; padding-right: 5px; text-align: right; font-size: 11px; font-weight: 700; }
.report h3 { padding: 7px 0 1px; font: 700 17px/22px Lato, sans-serif; text-align: right; color: #2a2e42; border-bottom: 3px solid #1268d0; }
.receipts { width: 100%; table-layout: fixed; border-collapse: collapse; font-size: 9px; line-height: 12px; color: #5f6069; white-space: nowrap; }
.receipts th { height: 32px; padding: 9px 0 0; text-align: left; font-family: Lato, sans-serif; color: #22263a; }
.receipts td { height: 22px; padding: 0; }
.receipts th:first-child, .receipts td:first-child { padding-left: 9px; }
.receipts .n { text-align: right; }
.receipts th:last-child, .receipts td:last-child { padding-right: 7px; }
.receipts tbody tr:nth-child(odd) { background: #f0f0f3; }
.receipts tbody tr:nth-child(even) td { height: 23px; }
.receipts tbody tr:last-child td { height: 19px; padding-top: 3px; }
.r1 { width: 27px; } .r2 { width: 57px; } .r3 { width: 109px; } .r4 { width: 137px; } .r5 { width: 71px; } .r6 { width: 74px; }
.r7 { width: 32px; } .r8 { width: 45px; } .r9 { width: 67px; } .r10 { width: 67px; }
.report-foot { height: 22px; background: #147cec; }

.invoice { display: flex; }
.invoice-main { flex: 1; min-width: 0; padding: 3px; border-right: 1px solid #b4b8b8; }
.side { display: flex; flex-direction: column; width: 20px; margin-left: 4px; overflow: hidden; border-left: 1px solid #aeb3b3; padding-top: 3px; }
.side button { height: 49px; flex: none; text-align: right; padding-top: 26px; border-bottom: 2px solid #b3bcbd; background: linear-gradient(#dfe6e7 50%, #cfd7d8 50%, #dde4e5); white-space: nowrap; line-height: 10px; }
.side button:first-child, .side button:last-child { height: 27px; }
.bar { display: flex; height: 18px; background: linear-gradient(#e3e9e9, #d2dadb); }
.bar-icons { display: flex; width: 301px; }
.bar button { flex: 1; display: flex; align-items: center; justify-content: center; border-right: 1px solid #7d8686; }
.bar svg { width: 12px; height: 12px; }
.bar .big { position: relative; gap: 2px; }
.bar .big .caret { position: absolute; right: 4px; }

.form { display: flex; gap: 4px; margin-top: 4px; padding-right: 3px; border-top: 1px solid #c6c9c9; height: 103px; border-bottom: 1px solid #bfc3c3; }
.col { flex: 172; min-width: 0; }
.row { display: flex; gap: 4px; }
.row .field { flex: 1; min-width: 0; }
.row.first { display: grid; grid-template-columns: 52fr 53fr 59fr; }
.tight { gap: 2px; }
.field label { display: block; height: 10px; line-height: 10px; white-space: nowrap; }
.ctl { display: flex; align-items: center; height: 14px; margin-bottom: 1px; }
.ctl input { flex: 1; min-width: 0; height: 14px; padding: 0 2px; border: 1px solid #989ea2; background: #fff; }
.ctl .code { flex: 0 0 31px; }
.ctl .long { flex-basis: 48px; }
.ctl .mid { flex-basis: 38px; }
.ctl output { flex: 1; min-width: 0; height: 14px; line-height: 12px; padding: 0 2px; overflow: hidden; white-space: nowrap; border: 1px solid #d8d8d8; border-top-color: #b4b7b7; border-left-color: #b4b7b7; }
.ctl * + output { margin-left: 3px; }
.pick, .spin { display: flex; align-items: center; justify-content: center; flex: 0 0 12px; height: 13px; }
.spin { flex-basis: 8px; background: #dfe3e3; }
.pick svg { width: 11px; height: 11px; }
.spin svg { width: 8px; height: 12px; }
.boxed { flex-basis: 11px; border: 1px solid #a8adad; }
.total { height: 50px; }
.total output { display: block; height: 38px; padding-right: 3px; text-align: right; font-size: 32px; line-height: 38px; color: #050505; border: 1px solid #d8d8d8; border-top-color: #b4b7b7; border-left-color: #b4b7b7; }
.select { position: relative; }
.select select { appearance: none; width: 100%; height: 14px; padding: 0 2px; border: 1px solid #989ea2; border-radius: 0; background: #fff; }
.select svg { position: absolute; right: 1px; width: 10px; height: 10px; }

.lines { display: flex; height: 194px; margin-top: 2px; border: 1px solid #c0c3c3; background: #fff; }
.grid { flex: 1; align-self: flex-start; table-layout: fixed; border-collapse: collapse; line-height: 10px; white-space: nowrap; }
.grid tr { height: 13px; }
.grid th { padding: 0 2px; text-align: left; font-weight: 400; background: linear-gradient(#f5f5f5, #d9dada); border-right: 1px solid #d2d4d4; }
.grid th .i6 { float: right; margin-top: 2px; }
.grid td { padding: 0 2px; text-align: right; border-right: 1px solid #dcdcdc; border-bottom: 1px solid #dcdcdc; }
.grid td:nth-child(-n+3) { text-align: left; }
.grid td:first-child { padding-left: 1px; }
.grid .red { color: #a5182c; }
.grid .sel { background: #1b83dc; color: #fff; }
.grid td:nth-child(3) { padding-left: 1px; }
.g1 { width: 59px; } .g3 { width: 221px; } .g2 { width: 102px; } .g4 { width: 47px; } .g5 { width: 37px; } .g6 { width: 74px; } .g7 { width: 37px; } .g8 { width: 36px; } .g9 { width: 77px; }
.code-cell { display: flex; align-items: center; gap: 3px; }
.tag { width: 10px; height: 10px; border: 1px solid #8cc4f0; background: #1179cf; color: #fff; line-height: 8px; text-align: center; }
.box { display: inline-block; width: 6px; height: 6px; margin-left: 2px; border: 1px solid #9aa4b0; vertical-align: middle; }
.dot { background: radial-gradient(#222 40%, #eee 45%); }
.scroll { display: flex; flex-direction: column; justify-content: space-between; width: 11px; padding: 2px 0; background: #f0f0f0; }
.scroll svg { width: 10px; height: 10px; fill: none; stroke: #999; }

.totals { display: grid; grid-template-columns: 206fr 72fr 73fr 277fr 75fr; margin-top: 3px; border-top: 1px solid #c4c7c7; }
.set { display: flex; gap: 3px; min-width: 0; padding: 0 3px; border-right: 1px solid #bfc2c2; }
.set label { flex: 1; min-width: 0; line-height: 10px; }
.set input { display: block; width: 100%; height: 15px; padding: 0 2px; border: 1px solid #9ba0a3; background: #fffbd9; text-align: right; }
.set .left { text-align: left; }
.set .bold { font-weight: 700; }
.lead { padding-left: 0; }
.last { border: 0; padding-right: 0; }

.arrow { position: absolute; left: 385px; top: 362px; width: 88px; height: 50px; }
```
